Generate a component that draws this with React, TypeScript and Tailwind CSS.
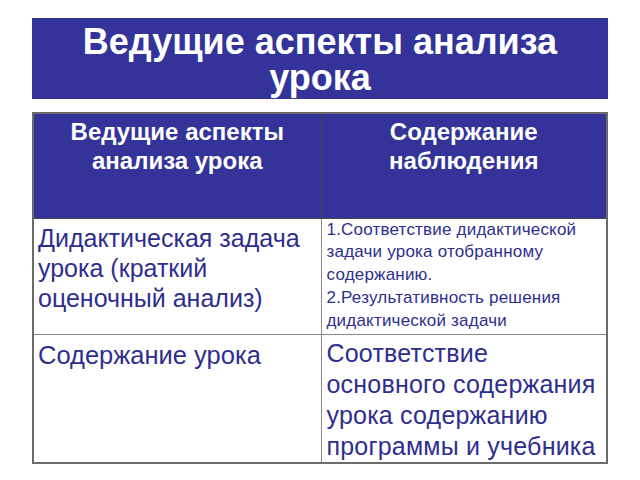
export default function App() {
  return (
    <div className="h-[480px] w-[640px] bg-white pt-[18px] font-['Liberation_Sans',Arial,sans-serif]">
      <div className="mx-[32px] h-[81px] bg-[#333399] pt-[6px] text-center text-[36px] font-bold leading-[36px] text-white">
        Ведущие аспекты анализа
        <br />
        урока
      </div>
      <table className="mx-[32px] mt-[13px] w-[576px] table-fixed border-collapse border-2 border-[#6b6b6b] text-[#2e2e8e]">
        <tbody>
          <tr className="h-[105px] bg-[#333399] align-top text-white">
            <th className="w-[288px] border border-[#444] pt-[3px] text-center text-[24px] font-bold leading-[29px]">
              Ведущие аспекты
              <br />
              анализа урока
            </th>
            <th className="border border-[#444] pt-[3px] text-center text-[24px] font-bold leading-[29px]">
              Содержание
              <br />
              наблюдения
            </th>
          </tr>
          <tr className="h-[116px] align-top">
            <td className="border border-[#888] pl-[4px] pt-[4px] text-[25px] leading-[30px]">
              Дидактическая задача урока (краткий оценочный анализ)
            </td>
            <td className="border border-[#888] pl-[5px] pr-0 pt-0 text-[17px] leading-[22.5px] tracking-[0.2px]">
              <p>1.Соответствие дидактической задачи урока отобранному содержанию.</p>
              <p className="mt-[1px]">2.Результативность решения дидактической задачи</p>
            </td>
          </tr>
          <tr className="h-[126px] align-top">
            <td className="border border-[#888] pl-[4px] pt-[5px] text-[25.5px] leading-[30px]">
              Содержание урока
            </td>
            <td className="border border-[#888] pl-[5px] pr-0 pt-[3px] text-[25px] leading-[31px] tracking-[0.2px]">
              Соответствие основного содержания урока содержанию программы и учебника
            </td>
          </tr>
        </tbody>
      </table>
    </div>
  )
}
